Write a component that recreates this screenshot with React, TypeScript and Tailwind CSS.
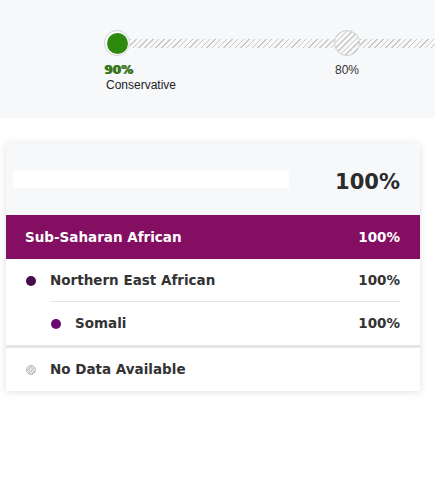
import React from "react";

const hatch =
  "bg-[repeating-linear-gradient(135deg,#c8c8c8_0px,#c8c8c8_1px,transparent_1px,transparent_4px)]";

function Row({
  label,
  value,
  dot,
  indent,
  divider,
}: {
  label: string;
  value?: string;
  dot: React.ReactNode;
  indent?: boolean;
  divider?: boolean;
}) {
  return (
    <div className={`flex items-center h-[43px] ${indent ? "pl-[45px]" : "pl-[20px]"} pr-[20px]`}>
      <div className="w-[24px] flex items-center">{dot}</div>
      <div
        className={`flex-1 flex items-center h-full ${divider ? "border-b border-[#e4e4e4]" : ""}`}
      >
        <span className="flex-1 text-[13.5px] font-bold text-[#333]">{label}</span>
        {value && <span className="text-[13.5px] font-bold text-[#333]">{value}</span>}
      </div>
    </div>
  );
}

export default function App() {
  return (
    <div className="w-[435px] h-[487px] bg-white font-['Liberation_Sans',sans-serif]">
      {/* timeline */}
      <div className="h-[118px] bg-[#f7f8fa] pt-[30px]">
        <div className="flex items-center h-[26px]">
          <div className="w-[104px]" />
          <div className="w-[26px] h-[26px] rounded-full border border-[#cfcfcf] bg-white flex items-center justify-center">
            <div className="w-[21px] h-[21px] rounded-full bg-[#2d8a0f]" />
          </div>
          <div className={`w-[204px] h-[9px] ${hatch}`} />
          <div className={`w-[26px] h-[26px] rounded-full border border-[#cfcfcf] ${hatch}`} />
          <div className={`flex-1 h-[9px] ${hatch}`} />
        </div>
        <div className="flex mt-[7px]">
          <div className="w-[104px]" />
          <div className="w-[230px] flex flex-col">
            <span className="text-[12px] leading-[14px] font-bold font-['DejaVu_Sans',sans-serif] text-[#2f7d14] [text-shadow:1px_0_0_#5a6a3a]">
              90%
            </span>
            <span className="text-[12px] leading-[14px] text-[#222] pl-[2px] mt-[1px]">Conservative</span>
          </div>
          <span className="text-[12px] leading-[14px] text-[#333] pl-[1px]">80%</span>
        </div>
      </div>

      {/* card */}
      <div className="mt-[25px] ml-[6px] w-[414px] bg-white shadow-[0_1px_8px_rgba(0,0,0,0.12)] font-['DejaVu_Sans',sans-serif]">
        <div className="h-[72px] bg-[#f7f8fa] flex items-center pl-[7px] pr-[20px]">
          <div className="w-[276px] h-[17px] bg-white" />
          <span className="flex-1 text-right text-[21px] font-bold text-[#2b2b2b] mt-[7px]">100%</span>
        </div>
        <div className="h-[44px] bg-[#840e62] flex items-center px-[19px]">
          <span className="flex-1 text-[13.5px] font-bold text-white">Sub-Saharan African</span>
          <span className="text-[13.5px] font-bold text-white pr-[1px]">100%</span>
        </div>
        <Row
          label="Northern East African"
          value="100%"
          divider
          dot={<div className="w-[10px] h-[10px] rounded-full bg-[#4a0b4e]" />}
        />
        <Row
          label="Somali"
          value="100%"
          indent
          dot={<div className="w-[10px] h-[10px] rounded-full bg-[#6a0a6e]" />}
        />
        <div className="h-[3px] bg-[#e6e6e6]" />
        <Row
          label="No Data Available"
          dot={
            <div className="w-[10px] h-[10px] rounded-full border border-[#bdbdbd] bg-[#e2e2e2] bg-[repeating-linear-gradient(135deg,#bdbdbd_0px,#bdbdbd_1px,transparent_1px,transparent_3px)]" />
          }
        />
      </div>
    </div>
  );
}
